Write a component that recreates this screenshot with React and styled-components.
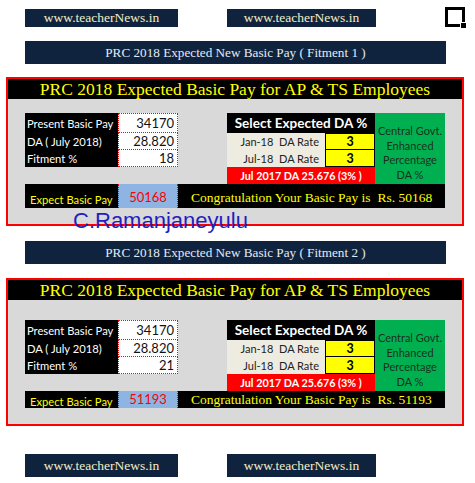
import React from "react";
import styled, { createGlobalStyle } from "styled-components";

const Global = createGlobalStyle`
  html, body { margin: 0; padding: 0; background: #fff; }
  * { box-sizing: border-box; }
`;

const Page = styled.div`
  width: 475px;
  height: 483px;
  padding-top: 8px;
  font-family: "Liberation Serif", serif;
  position: relative;
`;

const LinkRow = styled.div`
  display: flex;
  align-items: center;
  padding-left: 25px;
  margin-top: ${(p) => p.$top || 0}px;
`;

const LinkBox = styled.div`
  width: ${(p) => p.$w}px;
  height: ${(p) => p.$h}px;
  margin-left: ${(p) => p.$ml || 0}px;
  background: #10233e;
  color: #f3efc6;
  font-family: "Liberation Serif", serif;
  font-size: 13.5px;
  display: flex;
  align-items: center;
  justify-content: center;
  line-height: 1;
`;

const IconWrap = styled.div`
  margin-left: 69px;
  width: 21px;
  height: 21px;
  margin-top: -1px;
  display: flex;
`;

const Banner = styled.div`
  margin: ${(p) => p.$top}px 0 0 25px;
  width: 421px;
  height: 23px;
  background: #10233e;
  color: #e4ebf3;
  font-family: "Liberation Serif", serif;
  font-size: 13.2px;
  display: flex;
  align-items: center;
  justify-content: center;
`;

const Panel = styled.div`
  position: relative;
  margin: ${(p) => p.$top}px 0 0 6px;
  width: 458px;
  border: 2px solid #ff0000;
  background: #d9d9d9;
`;

const Title = styled.div`
  height: 20px;
  background: #000;
  color: #ffff00;
  font-family: "Liberation Serif", serif;
  font-size: 17.5px;
  line-height: 20px;
  text-align: center;
  white-space: nowrap;
`;

const Body = styled.div`
  padding: ${(p) => p.$pt}px 0 16px 17px;
`;

const TopSection = styled.div`
  display: flex;
  align-items: flex-start;
  gap: 49px;
`;

const InputTable = styled.div`
  display: grid;
  grid-template-columns: 93px 60px;
  grid-template-rows: 20px 17px 17px;
  width: 153px;
`;

const InLabel = styled.div`
  background: #000;
  color: #fff;
  font-family: Lato, "Liberation Sans", sans-serif;
  font-size: 11.2px;
  padding-left: 2px;
  display: flex;
  align-items: center;
  white-space: nowrap;
`;

const InValue = styled.div`
  background: #fff;
  color: #111;
  font-family: Lato, "Liberation Sans", sans-serif;
  font-size: 13px;
  border: 1px dotted #ff0000;
  border-top: ${(p) => (p.$first ? "1px dotted #ff0000" : "none")};
  display: flex;
  align-items: center;
  justify-content: flex-end;
  padding-right: 3px;
`;

const DABlock = styled.div`
  display: flex;
  width: 218px;
`;

const DATable = styled.div`
  display: grid;
  grid-template-columns: 98px 50px;
  grid-template-rows: 20px 17px 17px 17px;
  width: 148px;
`;

const DAHead = styled.div`
  grid-column: 1 / 3;
  background: #000;
  color: #fff;
  font-family: Lato, "Liberation Sans", sans-serif;
  font-weight: 700;
  font-size: 13.5px;
  display: flex;
  align-items: center;
  justify-content: center;
  white-space: nowrap;
`;

const DALabel = styled.div`
  background: #eeece1;
  color: #222;
  font-family: Lato, "Liberation Sans", sans-serif;
  font-size: 11px;
  display: flex;
  align-items: center;
  justify-content: flex-end;
  padding-right: 6px;
  white-space: pre;
`;

const DAValue = styled.div`
  background: #ffff00;
  color: #000;
  border: 1px solid #000;
  border-top: ${(p) => (p.$first ? "1px solid #000" : "none")};
  font-family: Lato, "Liberation Sans", sans-serif;
  font-weight: 700;
  font-size: 12.5px;
  display: flex;
  align-items: center;
  justify-content: center;
`;

const DANote = styled.div`
  grid-column: 1 / 3;
  background: #ff0000;
  color: #fff;
  font-family: Lato, "Liberation Sans", sans-serif;
  font-weight: 700;
  font-size: 10.8px;
  display: flex;
  align-items: center;
  justify-content: center;
  white-space: pre;
`;

const GreenBox = styled.div`
  width: 70px;
  height: 71px;
  background: #00b050;
  color: #1c301e;
  font-family: Lato, "Liberation Sans", sans-serif;
  font-size: 11px;
  line-height: 14.7px;
  text-align: center;
  padding-top: 11px;
`;

const ResultRow = styled.div`
  display: grid;
  grid-template-columns: 93px 60px 267px;
  height: ${(p) => p.$h}px;
  width: 420px;
`;

const ResLabel = styled.div`
  background: #000;
  color: #ffff00;
  font-family: Lato, "Liberation Sans", sans-serif;
  font-size: 11.2px;
  display: flex;
  align-items: flex-end;
  padding: 0 0 ${(p) => p.$pb}px 5px;
  white-space: nowrap;
`;

const ResValue = styled.div`
  background: #8db4e2;
  color: #ff0000;
  border-left: 1px dotted #ff0000;
  border-right: 1px dotted #ff0000;
  font-family: Lato, "Liberation Sans", sans-serif;
  font-size: 13px;
  display: flex;
  align-items: flex-end;
  justify-content: center;
  padding-bottom: ${(p) => p.$pb + 1}px;
`;

const ResText = styled.div`
  background: #000;
  color: #ffff00;
  font-family: "Liberation Serif", serif;
  font-size: 13.5px;
  display: flex;
  align-items: flex-end;
  padding: 0 0 ${(p) => p.$pb}px 13px;
  white-space: pre;
`;

const Signature = styled.div`
  position: absolute;
  left: 65px;
  top: 131px;
  font-family: "Liberation Sans", Arial, sans-serif;
  font-size: 22px;
  line-height: 22px;
  color: #1f1fc2;
  white-space: nowrap;
`;

const ExpandIcon = () => (
  <svg width="21" height="21" viewBox="0 0 21 21">
    <path d="M1.5 19.5 V1.5 H18.5 V15" fill="none" stroke="#000" strokeWidth="3" />
    <path d="M0 18.5 H15" fill="none" stroke="#000" strokeWidth="3" />
    <rect x="16" y="16" width="5" height="5" fill="#000" />
  </svg>
);

const Calculator = ({ top, pt, fitment, result, resH, resPb, children }) => (
  <Panel $top={top}>
    <Title>PRC 2018 Expected Basic Pay for AP &amp; TS Employees</Title>
    <Body $pt={pt}>
      <TopSection>
        <InputTable>
          <InLabel>Present Basic Pay</InLabel>
          <InValue $first>34170</InValue>
          <InLabel>DA ( July 2018)</InLabel>
          <InValue>28.820</InValue>
          <InLabel>Fitment %</InLabel>
          <InValue>{fitment}</InValue>
        </InputTable>
        <DABlock>
          <DATable>
            <DAHead>Select Expected DA %</DAHead>
            <DALabel>{"Jan-18  DA Rate"}</DALabel>
            <DAValue $first>3</DAValue>
            <DALabel>{"Jul-18  DA Rate"}</DALabel>
            <DAValue>3</DAValue>
            <DANote>{"Jul 2017 DA 25.676 (3% )"}</DANote>
          </DATable>
          <GreenBox>
            Central Govt.
            <br />
            Enhanced
            <br />
            Percentage
            <br />
            DA %
          </GreenBox>
        </DABlock>
      </TopSection>
      <ResultRow $h={resH}>
        <ResLabel $pb={resPb}>Expect Basic Pay</ResLabel>
        <ResValue $pb={resPb}>{result}</ResValue>
        <ResText $pb={resPb}>{`Congratulation Your Basic Pay is  Rs. ${result}`}</ResText>
      </ResultRow>
    </Body>
    {children}
  </Panel>
);

export default function App() {
  return (
    <>
      <Global />
      <Page>
        <LinkRow>
          <LinkBox $w={153} $h={18}>www.teacherNews.in</LinkBox>
          <LinkBox $w={149} $h={18} $ml={49}>www.teacherNews.in</LinkBox>
          <IconWrap>
            <ExpandIcon />
          </IconWrap>
        </LinkRow>
        <Banner $top={13}>PRC 2018 Expected New Basic Pay ( Fitment 1 )</Banner>
        <Calculator top={13} pt={14} fitment="18" result="50168" resH={24} resPb={2}>
          <Signature>C.Ramanjaneyulu</Signature>
        </Calculator>
        <Banner $top={15}>PRC 2018 Expected New Basic Pay ( Fitment 2 )</Banner>
        <Calculator top={14} pt={20} fitment="21" result="51193" resH={17} resPb={0} />
        <LinkRow $top={28}>
          <LinkBox $w={153} $h={23}>www.teacherNews.in</LinkBox>
          <LinkBox $w={149} $h={23} $ml={49}>www.teacherNews.in</LinkBox>
        </LinkRow>
      </Page>
    </>
  );
}
